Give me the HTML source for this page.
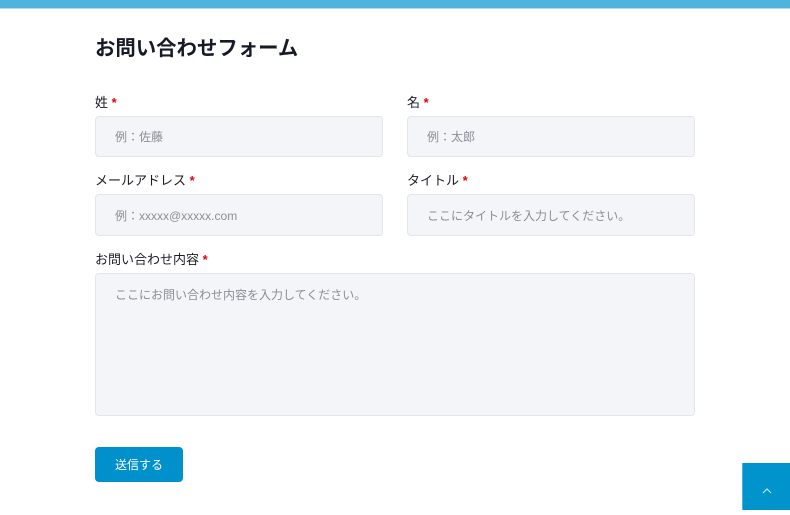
<!DOCTYPE html>
<html><head><meta charset="utf-8"><style>
*{box-sizing:border-box;margin:0;padding:0}
body{width:790px;height:510px;overflow:hidden;background:#fff;font-family:"Liberation Sans","Noto Sans CJK JP",sans-serif;position:relative;color:#1a1d24}
.bar{position:absolute;left:0;top:0;width:790px;height:9px;background:#4fb3db;border-bottom:1px solid #a8dcf0}
h1{position:absolute;left:95px;top:31px;font-size:20.4px;font-weight:bold;color:#151a26}
.lb{position:absolute;font-size:13px;color:#1a1d24}
.lb b{color:#e0000b;font-weight:bold}
.in{position:absolute;background:#f4f5f9;border:1px solid #e3e5ea;border-radius:4px;font-size:12px;color:#8a8e96;padding-left:19px;display:flex;align-items:center}
.btn{position:absolute;left:95px;top:447px;width:88px;height:35px;background:#0090cc;border-radius:4px;color:#fff;font-size:12px;display:flex;align-items:center;justify-content:center}
.top{position:absolute;left:742px;top:463px;width:48px;height:47px;background:#0093cc;border-left:1px solid #4fb3db}
</style></head><body>
<div class="bar"></div>
<h1>お問い合わせフォーム</h1>
<div class="lb" style="left:95px;top:92px">姓 <b>*</b></div>
<div class="lb" style="left:407px;top:92px">名 <b>*</b></div>
<div class="in" style="left:95px;top:116px;width:288px;height:41px">例：佐藤</div>
<div class="in" style="left:407px;top:116px;width:288px;height:41px">例：太郎</div>
<div class="lb" style="left:95px;top:170px">メールアドレス <b>*</b></div>
<div class="lb" style="left:407px;top:170px">タイトル <b>*</b></div>
<div class="in" style="left:95px;top:194px;width:288px;height:42px">例：xxxxx@xxxxx.com</div>
<div class="in" style="left:407px;top:194px;width:288px;height:42px">ここにタイトルを入力してください。</div>
<div class="lb" style="left:95px;top:249px">お問い合わせ内容 <b>*</b></div>
<div class="in" style="left:95px;top:273px;width:600px;height:143px;align-items:flex-start;padding-top:12px">ここにお問い合わせ内容を入力してください。</div>
<div class="btn">送信する</div>
<div class="top"><svg width="48" height="47"><path d="M20 30 L24 26 L28 30" stroke="#bfe6f5" stroke-width="1.2" fill="none"/></svg></div>
</body></html>
